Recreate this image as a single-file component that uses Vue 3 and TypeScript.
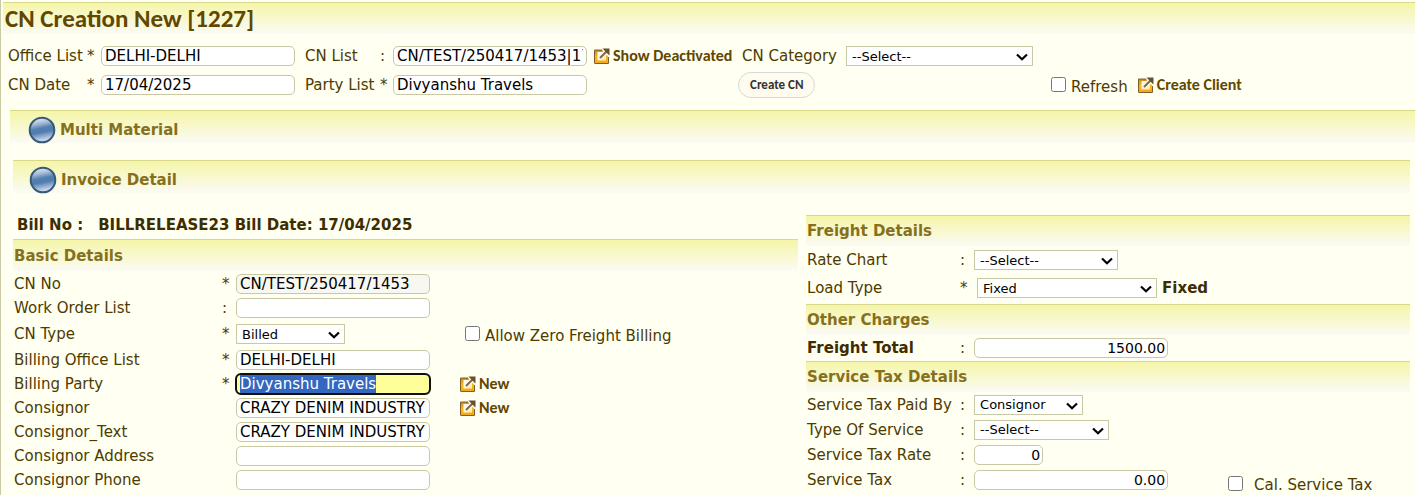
<script setup lang="ts">
import { onMounted, ref } from 'vue'

interface Field {
  id: string
  label: string
  mark: string
  kind: 'text' | 'select'
  value: string
  size?: string
  readonly?: boolean
  bold?: boolean
  note?: string
  check?: string
  link?: string
  focus?: boolean
}

interface Section {
  title: string
  fields: Field[]
}

const basic: Field[] = [
  { id: 'cn-no', label: 'CN No', mark: '*', kind: 'text', value: 'CN/TEST/250417/1453', readonly: true },
  { id: 'work-order', label: 'Work Order List', mark: ':', kind: 'text', value: '' },
  { id: 'cn-type', label: 'CN Type', mark: '*', kind: 'select', value: 'Billed', size: 'w-small', check: 'Allow Zero Freight Billing' },
  { id: 'billing-office', label: 'Billing Office List', mark: '*', kind: 'text', value: 'DELHI-DELHI' },
  { id: 'billing-party', label: 'Billing Party', mark: '*', kind: 'text', value: 'Divyanshu Travels', focus: true, link: 'New' },
  { id: 'consignor', label: 'Consignor', mark: '', kind: 'text', value: 'CRAZY DENIM INDUSTRY', link: 'New' },
  { id: 'consignor-text', label: 'Consignor_Text', mark: '', kind: 'text', value: 'CRAZY DENIM INDUSTRY' },
  { id: 'consignor-address', label: 'Consignor Address', mark: '', kind: 'text', value: '' },
  { id: 'consignor-phone', label: 'Consignor Phone', mark: '', kind: 'text', value: '' },
]

const charges: Section[] = [
  {
    title: 'Freight Details',
    fields: [
      { id: 'rate-chart', label: 'Rate Chart', mark: ':', kind: 'select', value: '--Select--', size: 'w-medium' },
      { id: 'load-type', label: 'Load Type', mark: '*', kind: 'select', value: 'Fixed', size: 'w-large', note: 'Fixed' },
    ],
  },
  {
    title: 'Other Charges',
    fields: [
      { id: 'freight-total', label: 'Freight Total', mark: ':', kind: 'text', value: '1500.00', bold: true },
    ],
  },
  {
    title: 'Service Tax Details',
    fields: [
      { id: 'tax-paid-by', label: 'Service Tax Paid By', mark: ':', kind: 'select', value: 'Consignor', size: 'w-small' },
      { id: 'service-type', label: 'Type Of Service', mark: ':', kind: 'select', value: '--Select--', size: 'w-type' },
      { id: 'tax-rate', label: 'Service Tax Rate', mark: ':', kind: 'text', value: '0', size: 'w-tiny' },
      { id: 'service-tax', label: 'Service Tax', mark: ':', kind: 'text', value: '0.00', check: 'Cal. Service Tax' },
    ],
  },
]

const root = ref<HTMLElement | null>(null)

onMounted(() => {
  const party = root.value?.querySelector<HTMLInputElement>('#billing-party')
  party?.focus()
  party?.select()
})
</script>

<template>
  <main ref="root" class="page">
    <svg class="defs" aria-hidden="true">
      <defs>
        <linearGradient id="gold" x1="0" y1="0" x2="0" y2="1">
          <stop offset="0" stop-color="#c08a20" />
          <stop offset="0.5" stop-color="#f8b820" />
          <stop offset="1" stop-color="#f0a818" />
        </linearGradient>
        <linearGradient id="sheet" x1="0" y1="0" x2="1" y2="1">
          <stop offset="0" stop-color="#ffffff" />
          <stop offset="1" stop-color="#ffe9a8" />
        </linearGradient>
        <linearGradient id="orb" x1="0.4" y1="0" x2="0.6" y2="1">
          <stop offset="0" stop-color="#e4eaf3" />
          <stop offset="0.22" stop-color="#a9bdd8" />
          <stop offset="0.42" stop-color="#5580b2" />
          <stop offset="0.58" stop-color="#4f7bae" />
          <stop offset="0.8" stop-color="#a3b9d8" />
          <stop offset="1" stop-color="#e8eef8" />
        </linearGradient>
        <symbol id="open-icon" viewBox="0 0 16 16">
          <path d="M0.5 2H14V15.5H0.5Z" fill="url(#gold)" />
          <path d="M3.5 4H12V12.5H3.5Z" fill="url(#sheet)" />
          <path d="M8 0H16V8H14L12 7L7 11L5 9L9 4Z" fill="#fffdf0" />
          <path d="M0.5 15V2H8M0.5 15.5H14.5V9" fill="none" stroke="#80602a" />
          <path d="M6 10L12.5 3.5" stroke="#7d6a4c" stroke-width="2.2" />
          <path d="M8.5 0.5H15.5V7.5L12.3 4.6Z" fill="#66522e" />
        </symbol>
        <symbol id="orb-icon" viewBox="0 0 28 28">
          <circle cx="14" cy="14" r="12.3" fill="url(#orb)" stroke="#355a78" stroke-width="2" />
        </symbol>
      </defs>
    </svg>

    <header class="bar title-bar"><h1>CN Creation New [1227]</h1></header>

    <form class="search" @submit.prevent>
      <label for="office">Office List</label><span class="mark">*</span>
      <input id="office" type="text" value="DELHI-DELHI">
      <label class="second" for="cn-list">CN List</label><span class="mark">:</span>
      <input id="cn-list" type="text" value="CN/TEST/250417/1453|17/04/2025">
      <a class="action" href="#"><svg class="open"><use href="#open-icon" /></svg>Show Deactivated</a>
      <label class="category" for="category">CN Category</label>
      <div class="control">
        <span class="picker w-category"><select id="category"><option>--Select--</option></select><svg class="chevron" viewBox="0 0 12 8"><path d="M1 1.5L6 6.2L11 1.5" /></svg></span>
      </div>
      <span></span>

      <label for="cn-date">CN Date</label><span class="mark">*</span>
      <input id="cn-date" type="text" value="17/04/2025">
      <label class="second" for="party">Party List</label><span class="mark">*</span>
      <input id="party" type="text" value="Divyanshu Travels">
      <span></span>
      <button type="button">Create CN</button>
      <span></span>
      <div class="tools">
        <label class="tick"><input type="checkbox"><span>Refresh</span></label>
        <a class="action" href="#"><svg class="open"><use href="#open-icon" /></svg>Create Client</a>
      </div>
    </form>

    <h2 class="bar fold wide"><svg class="orb"><use href="#orb-icon" /></svg>Multi Material</h2>

    <div class="content">
      <h2 class="bar fold"><svg class="orb"><use href="#orb-icon" /></svg>Invoice Detail</h2>
      <div class="columns">
        <section class="basic">
          <p class="bill"><span>Bill No :</span><span>BILLRELEASE23 Bill Date: 17/04/2025</span></p>
          <h2 class="bar">Basic Details</h2>
          <div v-for="f in basic" :key="f.id" class="row" :class="f.kind">
            <label :for="f.id">{{ f.label }}</label>
            <span class="mark">{{ f.mark }}</span>
            <div class="control">
              <input v-if="f.kind === 'text'" :id="f.id" type="text" :value="f.value" :readonly="f.readonly" :class="{ current: f.focus }" spellcheck="false">
              <span v-else class="picker" :class="f.size"><select :id="f.id"><option>{{ f.value }}</option></select><svg class="chevron" viewBox="0 0 12 8"><path d="M1 1.5L6 6.2L11 1.5" /></svg></span>
            </div>
            <label v-if="f.check" class="tick"><input type="checkbox"><span>{{ f.check }}</span></label>
            <a v-if="f.link" class="action" href="#"><svg class="open"><use href="#open-icon" /></svg>{{ f.link }}</a>
          </div>
        </section>

        <div class="charges">
          <section v-for="s in charges" :key="s.title">
            <h2 class="bar">{{ s.title }}</h2>
            <div v-for="f in s.fields" :key="f.id" class="row">
              <label :for="f.id" :class="{ bold: f.bold }">{{ f.label }}</label>
              <span class="mark">{{ f.mark }}</span>
              <div class="control" :class="{ noted: f.note }">
                <input v-if="f.kind === 'text'" :id="f.id" class="amount" type="text" :value="f.value" :class="f.size">
                <span v-else class="picker" :class="f.size"><select :id="f.id"><option>{{ f.value }}</option></select><svg class="chevron" viewBox="0 0 12 8"><path d="M1 1.5L6 6.2L11 1.5" /></svg></span>
                <span v-if="f.note" class="bold">{{ f.note }}</span>
              </div>
              <label v-if="f.check" class="tick"><input type="checkbox"><span>{{ f.check }}</span></label>
            </div>
          </section>
        </div>
      </div>
    </div>
  </main>
</template>

<style>
html,
body {
  background: #fffff2;
}

body {
  margin: 0;
  overflow: hidden;
}
</style>

<style scoped>
* {
  box-sizing: border-box;
}

.page {
  min-height: 100vh;
  padding-top: 2px;
  border-left: 1px solid #c9c9a6;
  color: #4d3b00;
  font: 15px/20px Verdana, "DejaVu Sans", sans-serif;
  white-space: nowrap;
}

.defs {
  position: absolute;
  width: 0;
  height: 0;
}

h1,
h2,
p {
  margin: 0;
}

.bar {
  display: flex;
  align-items: center;
  height: 32px;
  border-top: 1px solid #d9d98e;
  background: linear-gradient(#f5f5a8, #fbfbf5);
  color: #86701c;
  font-size: 15px;
  line-height: 20px;
}

.title-bar {
  margin-left: 2px;
  padding-left: 2px;
}

.title-bar h1 {
  color: #614700;
  font: bold 25px/28px Calibri, Carlito, Lato, sans-serif;
}

.search {
  display: grid;
  grid-template-columns: 79px 14px 194px 85px 13px 195px 150px 108px 205px 1fr;
  grid-template-rows: 30px 28px;
  align-items: center;
  padding: 7px 0 11px 7px;
}

.second {
  padding-left: 10px;
}

.category {
  padding-left: 4px;
}

.search .action {
  padding-left: 6px;
}

input[type="text"],
select {
  border: 1px solid #c8c8a4;
  background: #fff;
  color: #000;
  font-family: Verdana, "DejaVu Sans", sans-serif;
  margin: 0;
}

input[type="text"] {
  width: 194px;
  height: 20px;
  padding: 0 3px;
  border-radius: 5px;
  font-size: 15px;
}

input[readonly] {
  background: #f8f8f2;
}

input.current {
  background: #ffff99;
  outline: 2px solid #101010;
  outline-offset: -1px;
}

input.current::selection {
  background: #3367c0;
  color: #fff;
}

input.amount {
  padding: 0 2px;
  text-align: right;
  font-size: 14px;
}

.picker {
  position: relative;
  display: flex;
}

select {
  width: 100%;
  height: 20px;
  padding: 0 5px;
  border-radius: 0;
  appearance: none;
  font-size: 13px;
}

.chevron {
  position: absolute;
  top: 7px;
  right: 5px;
  width: 12px;
  height: 8px;
  fill: none;
  stroke: #000;
  stroke-width: 2.2;
  pointer-events: none;
}

.w-category { width: 187px; }
.w-small { width: 109px; }
.w-medium { width: 144px; }
.w-large { width: 180px; }
.w-type { width: 135px; }
input.w-tiny { width: 69px; }

button {
  justify-self: start;
  height: 26px;
  padding: 0 11px;
  border: 1px solid #d8d8d8;
  border-radius: 13px;
  background: #fffbee;
  color: #333;
  font: bold 13px/20px Calibri, Carlito, Lato, sans-serif;
}

.tools {
  display: flex;
  align-items: center;
  gap: 4px;
}

.tick {
  display: flex;
  align-items: center;
  gap: 5px;
  padding-top: 4px;
}

.tick input {
  width: 15px;
  height: 15px;
  margin: 0 0 6px;
}

.action {
  display: flex;
  align-items: center;
  gap: 3px;
  color: #614700;
  font: bold 16px/20px Calibri, Carlito, Lato, sans-serif;
  text-decoration: none;
}

.open {
  width: 16px;
  height: 16px;
}

.orb {
  width: 28px;
  height: 28px;
  margin-right: 4px;
}

.fold {
  height: 38px;
  padding-left: 16px;
  background: linear-gradient(#f5f5a8, #fbfbf5 32px, #fffff2 32px);
}

.wide {
  margin: 0 0 12px 9px;
  padding-left: 18px;
}

.content {
  padding: 0 5px 0 12px;
}

.columns {
  display: grid;
  grid-template-columns: 13fr 10fr;
  gap: 8px;
}

.bill {
  display: flex;
  gap: 15px;
  padding: 17px 0 4px 4px;
  color: #3d2e00;
  font-weight: bold;
}

.basic .bar,
.charges .bar {
  padding-left: 1px;
}

.basic .bar {
  margin-bottom: 1px;
}

.row {
  display: grid;
  align-items: center;
  height: 24px;
}

.basic .row {
  grid-template-columns: 208px 14px 224px 1fr;
  padding-left: 1px;
}

.basic .row.select {
  height: 28px;
}

.basic .tick {
  padding-left: 5px;
}

.charges {
  padding-top: 17px;
}

.charges .bar {
  height: 31px;
}

.charges .row {
  grid-template-columns: 153px 14px 254px 1fr;
  grid-template-rows: 100%;
  height: 25px;
  padding-left: 1px;
}

.charges section:first-child {
  padding-bottom: 2px;
}

.charges section:first-child .row {
  height: 28px;
}

.charges section:nth-child(2) .row {
  height: 26px;
}

.charges .tick {
  gap: 11px;
  padding-top: 10px;
}

.charges .tick input {
  margin-bottom: 2px;
}

.control {
  display: flex;
  align-items: center;
  gap: 5px;
}

.noted {
  padding-left: 3px;
}

.bold {
  color: #3d2e00;
  font-weight: bold;
}
</style>
